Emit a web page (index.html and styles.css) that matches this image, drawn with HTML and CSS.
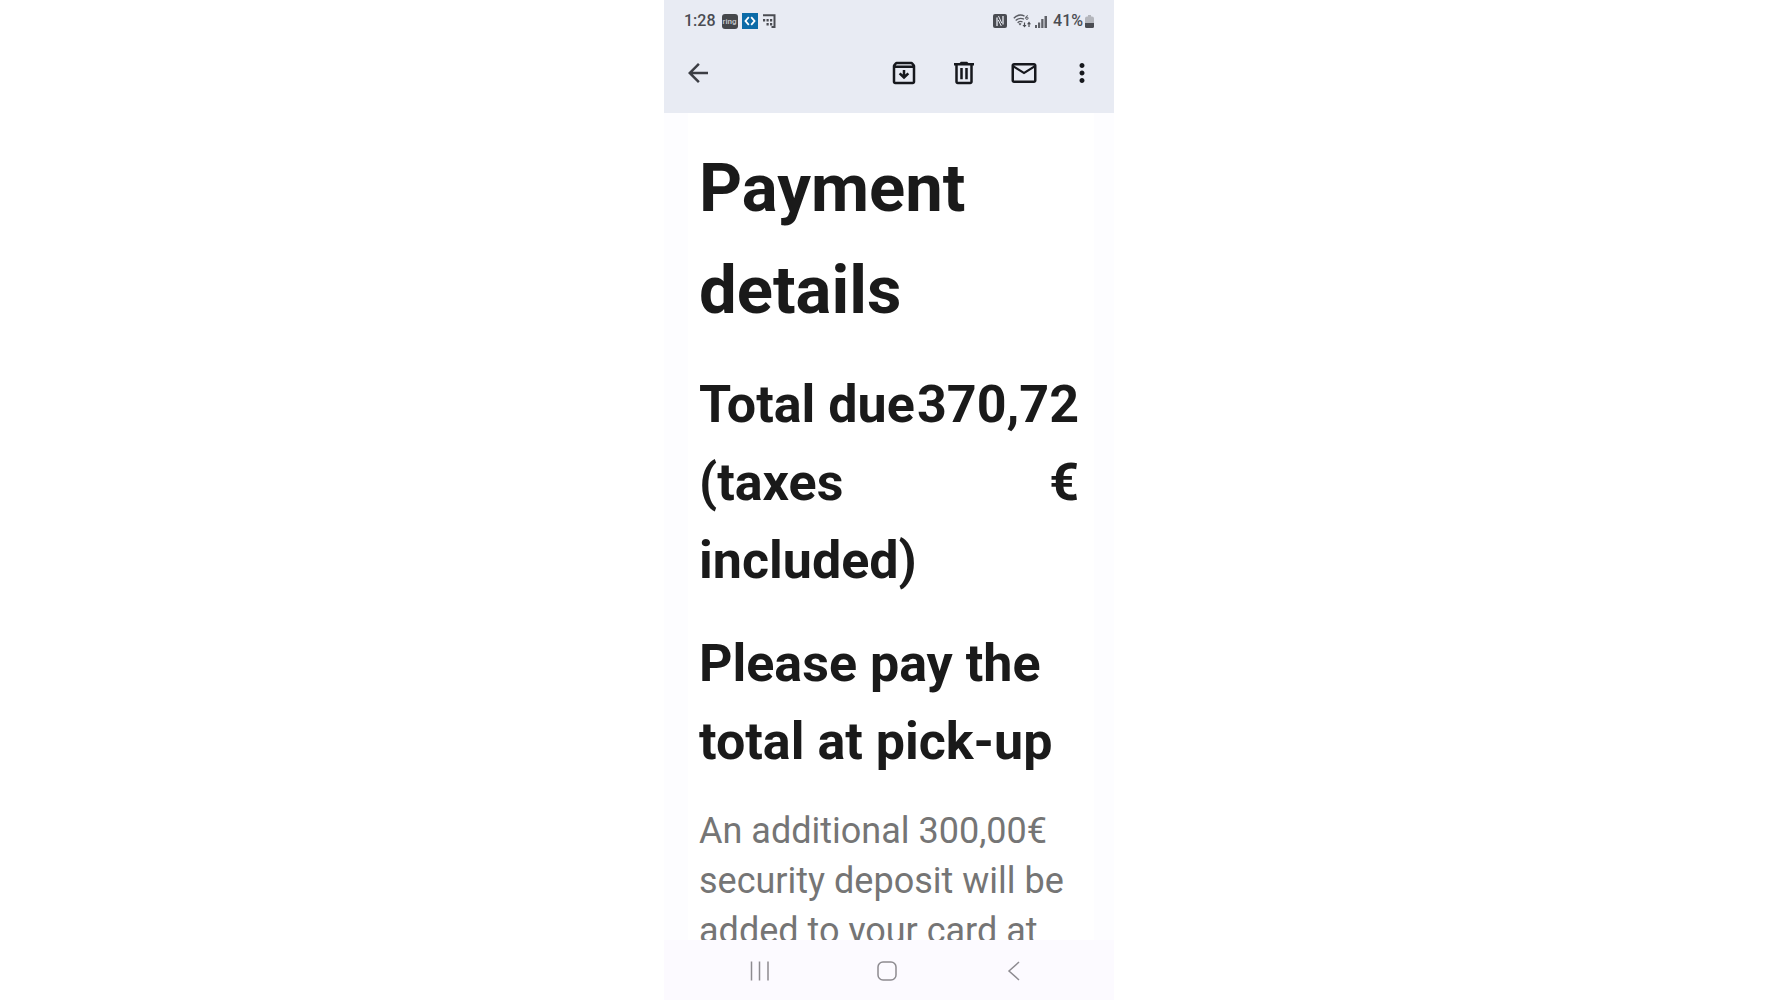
FILE: index.html
```html
<!DOCTYPE html>
<html lang="en">
<head>
<meta charset="utf-8">
<meta name="viewport" content="width=device-width, initial-scale=1">
<title>Payment details</title>
<link rel="stylesheet" href="styles.css">
</head>
<body>
<div class="phone">
  <header class="top">
    <div class="status">
      <span class="time">1:28</span>
      <span class="ring">ring</span>
      <svg class="app-icon" viewBox="0 0 16 16" aria-hidden="true"><path fill="#0b6ba8" d="M0 0h16v16H0z"/><path d="M6.800 4.200 3.500 8l3.300 3.800M9.200 4.200 12.500 8l-3.300 3.800" fill="none" stroke="#fff" stroke-width="1.800"/></svg>
      <svg class="app-icon" viewBox="0 0 16 16" aria-hidden="true"><path d="M1 2.200h11.500V14H9.500" fill="none" stroke="#4a4c52" stroke-width="2"/><path fill="#4a4c52" d="M1 6h2.200v2.500H1zM4.500 6h2.200v2.500H4.500zM8 6h2.200v2.500H8zM4.500 10h2.200v2.500H4.500zM8 10h2.200v2.500H8z"/></svg>
      <span class="spacer"></span>
      <svg class="nfc" viewBox="0 0 14 14" aria-hidden="true"><rect width="14" height="14" rx="2" fill="#4a4c52"/><path d="M4 12V3.500M10 2v8.500" stroke="#e8ebf3" stroke-width="1.300"/><path d="m5.500 2 3.200 7M5.300 6l3 6" stroke="#e8ebf3" stroke-width="1"/></svg>
      <svg class="wifi" viewBox="0 0 18 14" aria-hidden="true"><g fill="none" stroke="#5b5d63" stroke-width="1.400"><path d="M.8 4.200Q6-.8 11.500 2.200M2.700 6.500Q6.500 3 11 5.200M4.600 8.700Q7 6.700 9.500 7.800"/></g><path fill="#5b5d63" d="m5.500 9.800 1.500-.9 1.500.9L7 11.500z"/><path d="M14.800 1.500q-2 .5-2 2.500" fill="none" stroke="#5b5d63"/><circle cx="13.900" cy="4.200" r="1.200" fill="none" stroke="#5b5d63"/><path d="M11.500 8.500v3M16 13V9.500" stroke="#4a4c52" stroke-width="1.200"/><path fill="#4a4c52" d="M9.500 11h4l-2 2.500zM14 10.200h4L16 7.500z"/></svg>
      <svg class="signal" viewBox="0 0 12 13" aria-hidden="true"><path fill="#5f6167" d="M0 10h2v3H0zM3 7.500h2.200V13H3zM6.200 4h2.300v9H6.200zM9.500 1H12v12H9.500z"/></svg>
      <span class="charge">41%</span>
      <svg class="battery" viewBox="0 0 9 13" aria-hidden="true"><path fill="#b4b6bc" d="M3 0h3v1.500h1A2 2 0 0 1 9 3.500V8H0V3.500a2 2 0 0 1 2-2h1z"/><path fill="#4a4c52" d="M0 8h9v3.500A1.500 1.500 0 0 1 7.500 13h-6A1.500 1.500 0 0 1 0 11.500z"/></svg>
    </div>
    <div class="toolbar">
      <button class="tool back" type="button" aria-label="Back"><svg viewBox="0 0 24 24"><path d="M20 11H7.830l5.590-5.590L12 4l-8 8 8 8 1.410-1.410L7.830 13H20z"/></svg></button>
      <button class="tool" type="button" aria-label="Archive"><svg viewBox="0 0 24 24"><path d="m20.540 5.230-1.390-1.680C18.880 3.210 18.470 3 18 3H6c-.47 0-.88.210-1.160.550L3.460 5.230C3.170 5.570 3 6.020 3 6.500V19c0 1.100.9 2 2 2h14c1.100 0 2-.9 2-2V6.500c0-.48-.17-.93-.46-1.270zM6.240 5h11.520l.83 1H5.420l.82-1zM5 19V8h14v11H5zM11 9.500v3.700l-1.800-1.700L7.800 12.900 12 17l4.200-4.100-1.400-1.400-1.800 1.700V9.500z"/></svg></button>
      <button class="tool" type="button" aria-label="Delete"><svg viewBox="0 0 24 24"><path d="M9 8h2v9H9zM13 8h2v9h-2zM15.500 4l-1-1h-5l-1 1H4v2h1v13c0 1.100.9 2 2 2h10c1.100 0 2-.9 2-2V6h1V4zM17 19H7V6h10z"/></svg></button>
      <button class="tool" type="button" aria-label="Mark as unread"><svg viewBox="0 0 24 24"><path d="M22 6c0-1.100-.9-2-2-2H4c-1.100 0-2 .9-2 2v12c0 1.100.9 2 2 2h16c1.100 0 2-.9 2-2V6zm-2 0-8 5-8-5h16zm0 12H4V8l8 5 8-5v10z"/></svg></button>
      <button class="tool more" type="button" aria-label="More options"><svg viewBox="0 0 24 24"><path d="M12 8c1.100 0 2-.9 2-2s-.9-2-2-2-2 .9-2 2 .9 2 2 2zm0 2c-1.100 0-2 .9-2 2s.9 2 2 2 2-.9 2-2-.9-2-2-2zm0 6c-1.100 0-2 .9-2 2s.9 2 2 2 2-.9 2-2-.9-2-2-2z"/></svg></button>
    </div>
  </header>
  <main class="message">
    <h1 class="title">Payment details</h1>
    <div class="total">
      <span>Total due (taxes included)</span>
      <span class="amount">370,72 €</span>
    </div>
    <h2 class="notice">Please pay the total at pick-up</h2>
    <p class="deposit">An additional 300,00€ security deposit will be added to your card at</p>
  </main>
  <nav class="system-nav" aria-label="System">
    <button type="button" aria-label="Recent apps"><svg viewBox="0 0 20 20"><path d="M1.500 .5v19M9.500 .5v19M18 .5v19"/></svg></button>
    <button type="button" aria-label="Home"><svg viewBox="0 0 20 20"><rect x="1" y="1" width="18" height="18" rx="5"/></svg></button>
    <button type="button" aria-label="Go back"><svg viewBox="0 0 20 20"><path d="M15 1 5 10l10 9"/></svg></button>
  </nav>
</div>
</body>
</html>
```
FILE: styles.css
```css
* {
  box-sizing: border-box;
}

body {
  margin: 0;
  background: #fff;
  color: #1a1a1a;
  font-family: Roboto, "Liberation Sans", sans-serif;
}

button {
  padding: 0;
  border: 0;
  background: none;
}

.phone {
  display: flex;
  flex-direction: column;
  width: 100%;
  max-width: 450px;
  height: 100vh;
  margin: 0 auto;
  overflow: hidden;
}

.top {
  flex: none;
  padding: 10px 20px 25px;
  background: #e8ebf3;
}

.status {
  display: flex;
  align-items: center;
  gap: 4px;
  height: 22px;
  color: #4a4c52;
  font-size: 16px;
  font-weight: 500;
  line-height: 22px;
}

.ring {
  width: 16px;
  margin-left: 2px;
  border-radius: 3px;
  background: #45474b;
  color: #c9cbd0;
  font-size: 8px;
  line-height: 15px;
  text-align: center;
}

.app-icon {
  width: 16px;
  height: 16px;
}

.spacer {
  flex: 1;
}

.nfc {
  width: 14px;
  height: 14px;
}

.wifi {
  width: 18px;
  height: 14px;
  margin-left: 2px;
}

.signal {
  width: 12px;
  height: 13px;
}

.charge {
  margin: 0 -2px 0 2px;
}

.battery {
  width: 9px;
  height: 13px;
}

.toolbar {
  display: flex;
  gap: 30px;
  margin-top: 26px;
}

.tool {
  display: flex;
  justify-content: center;
  width: 30px;
  height: 30px;
}

.tool svg {
  flex: none;
  width: 30px;
  height: 30px;
  fill: #16181d;
}

.back {
  margin-right: auto;
  margin-left: -1px;
}

.back svg {
  fill: #3c3e44;
}

.more {
  width: 25px;
}

.message {
  display: flex;
  flex: 1;
  flex-direction: column;
  gap: 25px;
  min-height: 0;
  padding: 24px 35px 0;
  overflow: hidden;
  background: linear-gradient(90deg, #fdfdff 24px, #fff 24px calc(100% - 20px), #fdfdff calc(100% - 20px));
}

.title,
.notice,
.deposit {
  margin: 0;
}

.title {
  font-size: 67px;
  line-height: 102px;
}

.total,
.notice {
  font-size: 52px;
  font-weight: 700;
  line-height: 78px;
}

.total {
  display: grid;
  grid-template-columns: minmax(0, 1fr) min-content;
}

.amount {
  text-align: right;
}

.deposit {
  color: #757575;
  font-size: 36px;
  line-height: 50px;
}

.system-nav {
  display: grid;
  flex: none;
  grid-template-columns: repeat(3, 1fr);
  height: 60px;
  padding: 2px 36px 0 32px;
  background: #fcfaff;
}

.system-nav button {
  display: flex;
  align-items: center;
  justify-content: center;
}

.system-nav svg {
  width: 20px;
  height: 20px;
  fill: none;
  stroke: #8d8b90;
  stroke-width: 1.5;
}
```
